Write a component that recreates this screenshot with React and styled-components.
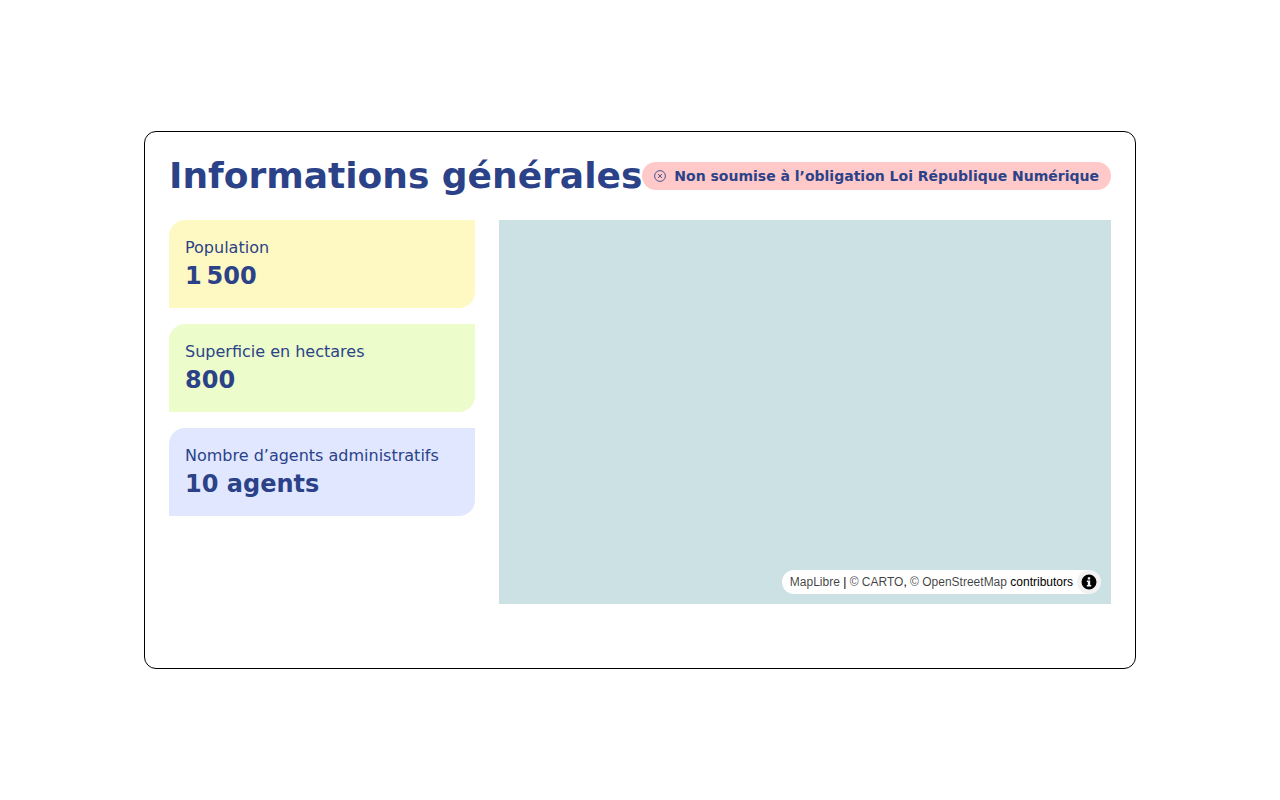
import React from 'react'
import styled, { createGlobalStyle } from 'styled-components'

const Global = createGlobalStyle`
  * {
    box-sizing: border-box;
  }
  body {
    margin: 0;
    background: #fff;
    font-family: "DejaVu Sans", sans-serif;
    color: #2b4288;
  }
`

const Page = styled.div`
  min-height: 800px;
  display: flex;
  align-items: center;
  justify-content: center;
`

const Panel = styled.section`
  width: 992px;
  height: 538px;
  border: 1px solid #000;
  border-radius: 12px;
  padding: 24px;
  display: flex;
  flex-direction: column;
  gap: 24px;
`

const Header = styled.div`
  display: flex;
  align-items: center;
  justify-content: space-between;
  height: 40px;
`

const Title = styled.h1`
  margin: 0;
  font-size: 36px;
  line-height: 40px;
  font-weight: 700;
  white-space: nowrap;
`

const Badge = styled.div`
  display: flex;
  align-items: center;
  gap: 8px;
  height: 28px;
  padding: 0 12px;
  border-radius: 14px;
  background: #ffc9c9;
  font-size: 14px;
  font-weight: 700;
  white-space: nowrap;
`

const Content = styled.div`
  display: flex;
  gap: 24px;
`

const Stats = styled.div`
  width: 306px;
  display: flex;
  flex-direction: column;
  gap: 16px;
`

const Stat = styled.div`
  height: 88px;
  padding: 16px;
  background: ${p => p.$bg};
  border-radius: 16px 0 16px 0;
`

const Label = styled.div`
  font-size: 16px;
  line-height: 24px;
`

const Value = styled.div`
  font-size: 24px;
  line-height: 32px;
  font-weight: 700;
`

const Map = styled.div`
  position: relative;
  flex: 1;
  height: 384px;
  background: #cce1e4;
`

const Attribution = styled.div`
  position: absolute;
  right: 10px;
  bottom: 10px;
  height: 24px;
  display: flex;
  align-items: center;
  padding-left: 8px;
  border-radius: 12px;
  background: #fff;
  font-family: "Liberation Sans", sans-serif;
  font-size: 12px;
  line-height: 20px;
  color: #000;
  white-space: nowrap;
`

const AttributionLink = styled.span`
  color: rgba(0, 0, 0, 0.75);
`

const InfoButton = styled.div`
  width: 24px;
  height: 24px;
  margin-left: 4px;
  border-radius: 50%;
  background: rgba(0, 0, 0, 0.05);
  display: flex;
  align-items: center;
  justify-content: center;
`

const stats = [
  { label: 'Population', value: '1\u202f500', bg: '#fef9c2' },
  { label: 'Superficie en hectares', value: '800', bg: '#ecfccb' },
  { label: 'Nombre d’agents administratifs', value: '10 agents', bg: '#e0e7ff' },
]

const CrossCircle = () => (
  <svg width="12" height="12" viewBox="0 0 12 12" fill="none" stroke="#2b4288" strokeWidth="1" opacity="0.85">
    <circle cx="6" cy="6" r="5.4" />
    <path d="M4 4l4 4M8 4l-4 4" />
  </svg>
)

const InfoIcon = () => (
  <svg width="24" height="24" viewBox="0 0 24 24">
    <path
      fillRule="evenodd"
      d="M12 4.5a7.5 7.5 0 1 1 0 15 7.5 7.5 0 0 1 0-15zM10.8 7.2h2.4v2.2h-2.4zM9.8 10.4h3.4v4.6h1v1.6H9.8V15h1v-3h-1z"
    />
  </svg>
)

export default function App() {
  return (
    <Page>
      <Global />
      <Panel>
        <Header>
          <Title>Informations générales</Title>
          <Badge>
            <CrossCircle />
            Non soumise à l’obligation Loi République Numérique
          </Badge>
        </Header>
        <Content>
          <Stats>
            {stats.map(s => (
              <Stat key={s.label} $bg={s.bg}>
                <Label>{s.label}</Label>
                <Value>{s.value}</Value>
              </Stat>
            ))}
          </Stats>
          <Map>
            <Attribution>
              <AttributionLink>MapLibre</AttributionLink>&nbsp;|&nbsp;
              <AttributionLink>© CARTO</AttributionLink>,&nbsp;
              <AttributionLink>© OpenStreetMap</AttributionLink>&nbsp;contributors
              <InfoButton>
                <InfoIcon />
              </InfoButton>
            </Attribution>
          </Map>
        </Content>
      </Panel>
    </Page>
  )
}
